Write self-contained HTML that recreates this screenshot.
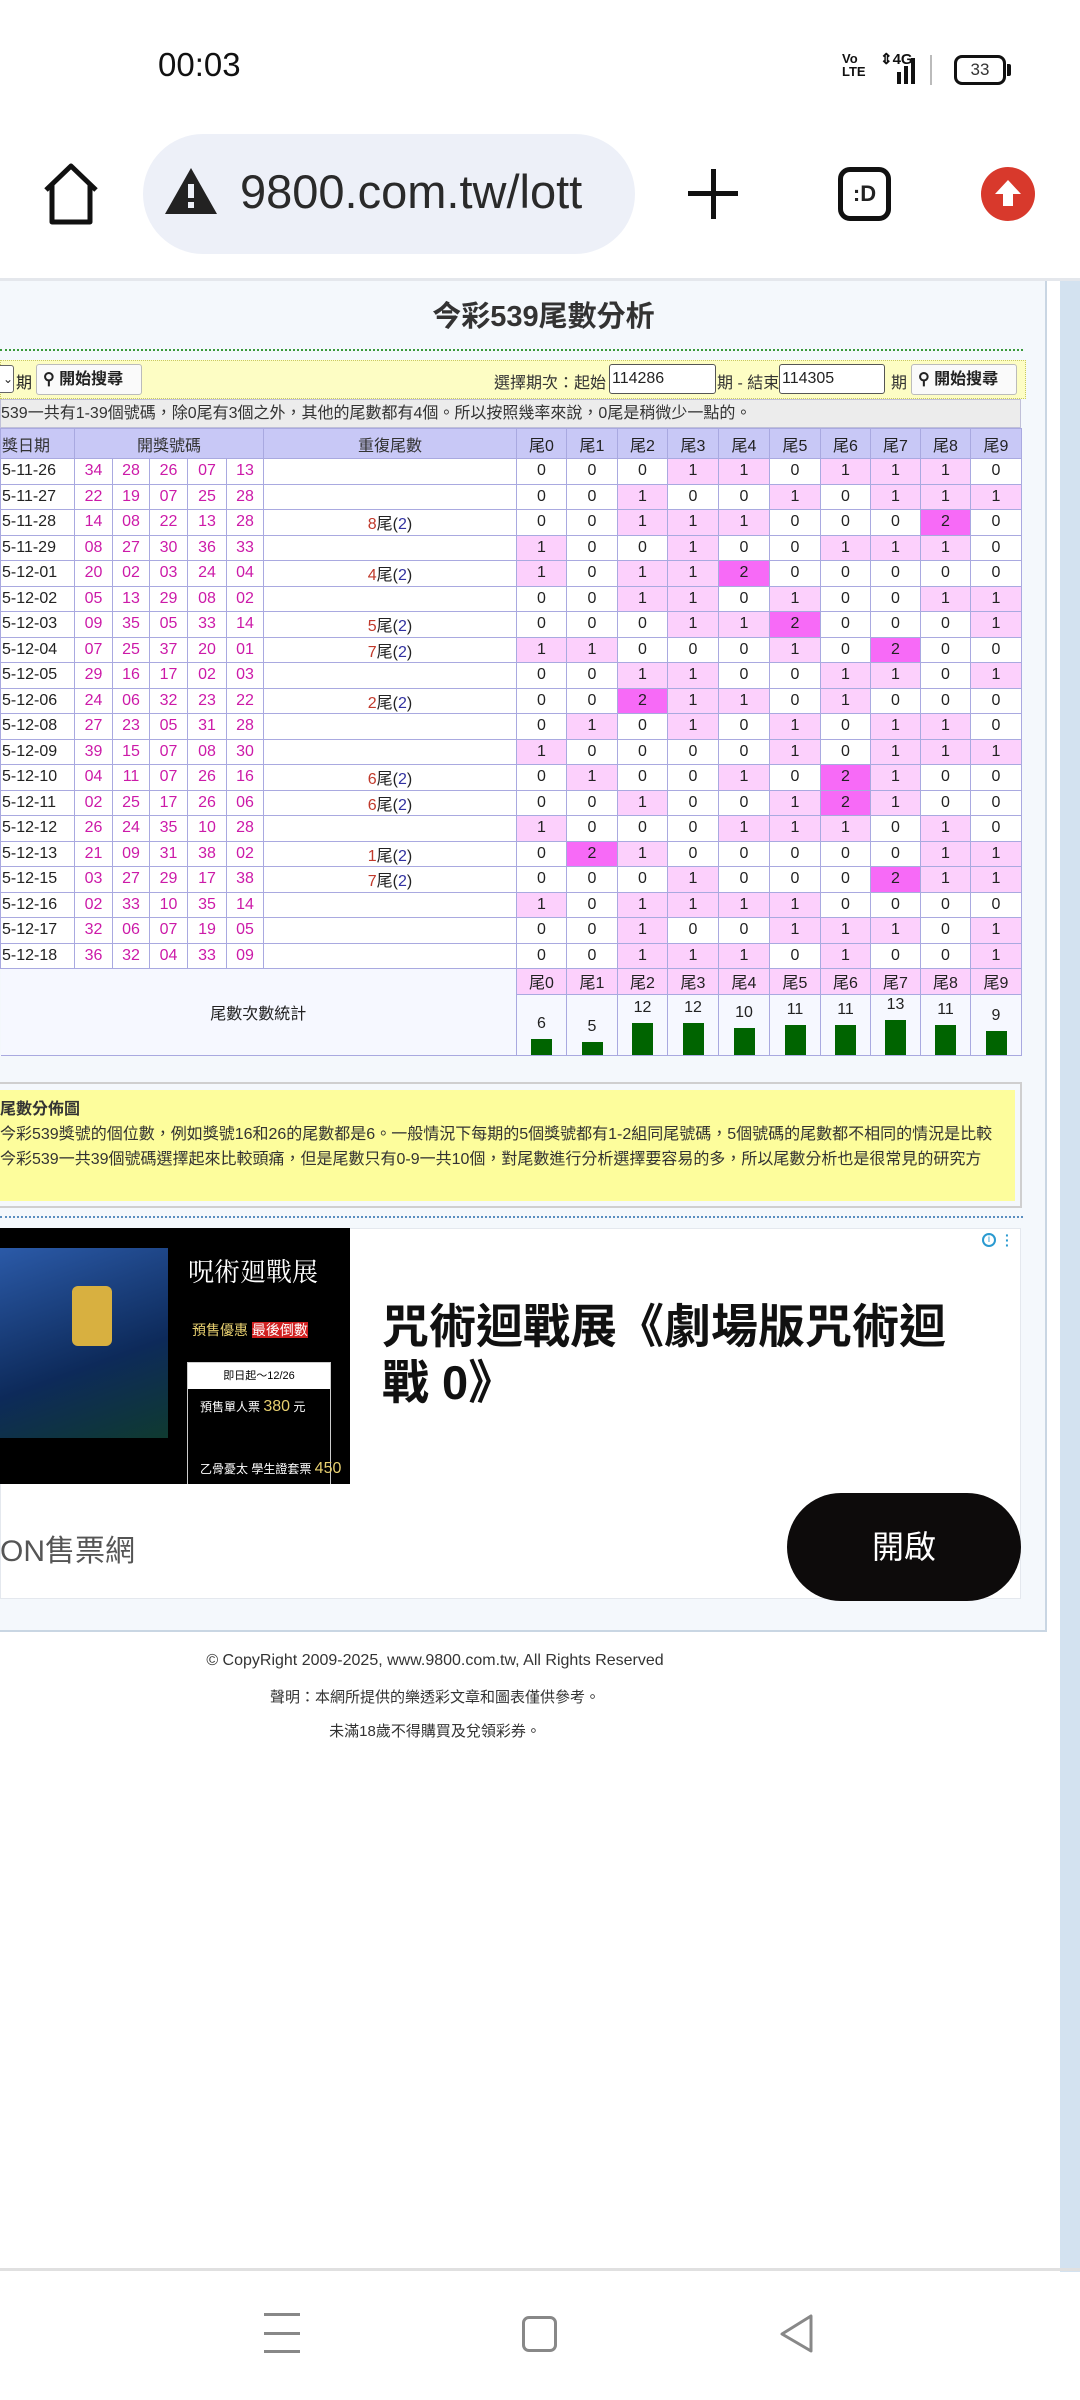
<!DOCTYPE html>
<html><head><meta charset="utf-8">
<style>
*{margin:0;padding:0;box-sizing:border-box}
body{width:1080px;height:2400px;background:#fff;position:relative;overflow:hidden;font-family:"Liberation Sans","Noto Sans CJK TC",sans-serif;color:#222}
.abs{position:absolute}
#page{position:absolute;left:0;top:278px;width:1080px;height:1991px;background:#fff;border-top:3px solid #e4e7ec}
#cont{position:absolute;left:0;top:0;width:1047px;height:1351px;background:#f4f8fc;border-right:2px solid #c9d6e3;border-bottom:2px solid #c9d6e3}
#strip{position:absolute;left:1060px;top:0;width:20px;height:1991px;background:#d3e2f0}
table{border-collapse:collapse;table-layout:fixed;position:absolute;left:0;top:455px;font-size:16px}
td{border:1px solid #a9a9e0;height:25.5px;text-align:center;color:#222;padding:0;white-space:nowrap;overflow:hidden;background:#fff}
td.d{text-align:left;padding-left:1px}
td.n{color:#cc1aa8}
td.p{background:#fcd0fc}
td.m{background:#f76af7}
.r{color:#c0392b}
.b{color:#3030a0}
</style></head><body>
<!-- status bar -->
<div class="abs" style="left:158px;top:46px;font-size:33px;color:#111">00:03</div>
<div class="abs" style="left:842px;top:52px;font-size:13px;line-height:13px;font-weight:bold;color:#111">Vo<br>LTE</div>
<div class="abs" style="left:880px;top:50px;font-size:15px;font-weight:bold;color:#111">⇕4G</div>
<div class="abs" style="left:897px;top:72px;width:4px;height:12px;background:#111"></div>
<div class="abs" style="left:904px;top:66px;width:4px;height:18px;background:#111"></div>
<div class="abs" style="left:911px;top:58px;width:4px;height:26px;background:#111"></div>
<div class="abs" style="left:930px;top:55px;width:2px;height:30px;background:#bbb"></div>
<div class="abs" style="left:954px;top:55px;width:52px;height:30px;border:3px solid #111;border-radius:8px;font-size:17px;text-align:center;line-height:24px;color:#333">33</div>
<div class="abs" style="left:1007px;top:64px;width:4px;height:12px;background:#111;border-radius:0 2px 2px 0"></div>
<!-- url bar -->
<svg class="abs" style="left:40px;top:160px" width="62" height="68" viewBox="0 0 62 68"><path d="M6 30 L31 6 L56 30 M12 24 V62 H50 V24" fill="none" stroke="#111" stroke-width="5" stroke-linejoin="round"/></svg>
<div class="abs" style="left:143px;top:134px;width:492px;height:120px;background:#edf0f8;border-radius:60px"></div>
<svg class="abs" style="left:163px;top:166px" width="56" height="50" viewBox="0 0 56 50"><path d="M28 2 L54 48 H2 Z" fill="#222"/><rect x="25" y="18" width="6" height="14" fill="#edf0f8"/><rect x="25" y="36" width="6" height="6" fill="#edf0f8"/></svg>
<div class="abs" style="left:240px;top:164px;font-size:47px;color:#2a2a2a">9800.com.tw/lott</div>
<div class="abs" style="left:688px;top:191px;width:50px;height:5px;background:#111"></div>
<div class="abs" style="left:711px;top:169px;width:5px;height:50px;background:#111"></div>
<div class="abs" style="left:838px;top:167px;width:53px;height:54px;border:5px solid #111;border-radius:12px;font-size:22px;font-weight:bold;text-align:center;line-height:44px">:D</div>
<div class="abs" style="left:981px;top:167px;width:54px;height:54px;border-radius:50%;background:#d8392c"></div>
<svg class="abs" style="left:981px;top:167px" width="54" height="54" viewBox="0 0 54 54"><path d="M27 13 L40 27 H32 V39 H22 V27 H14 Z" fill="#fff"/></svg>

<div id="page">
<div id="strip"></div>
<div id="cont">
<div class="abs" style="left:0;top:12px;width:1047px;text-align:center;padding-left:40px;font-size:29px;font-weight:bold;color:#333">今彩539尾數分析</div>
<div class="abs" style="left:0;top:68px;width:1023px;border-top:2px dotted #3a9a3a"></div>
<!-- yellow bar -->
<div class="abs" style="left:0;top:79px;width:1026px;height:39px;background:#fdfdc4;border:1px dotted #c8c860"></div>
<div class="abs" style="left:-6px;top:84px;width:20px;height:28px;border:1px solid #666;border-radius:3px;background:#fff;font-size:12px;line-height:26px;text-align:right">⌄</div>
<div class="abs" style="left:16px;top:88px;font-size:16px">期</div>
<div class="abs" style="left:36px;top:83px;width:106px;height:31px;border:1px solid #bbb;border-radius:3px;background:#fafafa;font-size:16px;font-weight:bold;line-height:29px;padding-left:6px">⚲ 開始搜尋</div>
<div class="abs" style="left:494px;top:88px;font-size:16px;color:#333">選擇期次：起始</div>
<div class="abs" style="left:609px;top:83px;width:107px;height:30px;border:1px solid #555;border-radius:3px;background:#fff;font-size:16px;line-height:28px;padding-left:2px">114286</div>
<div class="abs" style="left:717px;top:88px;font-size:16px;color:#333">期 - 結束</div>
<div class="abs" style="left:779px;top:83px;width:106px;height:30px;border:1px solid #555;border-radius:3px;background:#fff;font-size:16px;line-height:28px;padding-left:2px">114305</div>
<div class="abs" style="left:891px;top:88px;font-size:16px;color:#333">期</div>
<div class="abs" style="left:911px;top:83px;width:106px;height:31px;border:1px solid #bbb;border-radius:3px;background:#fafafa;font-size:16px;font-weight:bold;line-height:29px;padding-left:6px">⚲ 開始搜尋</div>
<div class="abs" style="left:0;top:118px;width:1021px;height:29px;background:#ececec;border:1px solid #c0c0d8;font-size:16px;line-height:27px;color:#333;white-space:nowrap;overflow:hidden">539一共有1-39個號碼，除0尾有3個之外，其他的尾數都有4個。所以按照幾率來說，0尾是稍微少一點的。</div>
</div>

<table style="top:147px">
<colgroup><col style="width:74px"><col style="width:38px"><col style="width:37px"><col style="width:38px"><col style="width:39px"><col style="width:37px"><col style="width:253px"><col style="width:50px"><col style="width:51px"><col style="width:50px"><col style="width:51px"><col style="width:51px"><col style="width:51px"><col style="width:50px"><col style="width:50px"><col style="width:50px"><col style="width:51px"></colgroup>
<tr style="height:30px"><td class="d" style="background:#c8c8f6;color:#333">獎日期</td><td colspan="5" style="background:#c8c8f6;color:#333">開獎號碼</td><td style="background:#c8c8f6;color:#333">重復尾數</td><td style="background:#c8c8f6">尾0</td><td style="background:#c8c8f6">尾1</td><td style="background:#c8c8f6">尾2</td><td style="background:#c8c8f6">尾3</td><td style="background:#c8c8f6">尾4</td><td style="background:#c8c8f6">尾5</td><td style="background:#c8c8f6">尾6</td><td style="background:#c8c8f6">尾7</td><td style="background:#c8c8f6">尾8</td><td style="background:#c8c8f6">尾9</td></tr>
<tr><td class="d">5-11-26</td><td class="n">34</td><td class="n">28</td><td class="n">26</td><td class="n">07</td><td class="n">13</td><td></td><td>0</td><td>0</td><td>0</td><td class="p">1</td><td class="p">1</td><td>0</td><td class="p">1</td><td class="p">1</td><td class="p">1</td><td>0</td></tr>
<tr><td class="d">5-11-27</td><td class="n">22</td><td class="n">19</td><td class="n">07</td><td class="n">25</td><td class="n">28</td><td></td><td>0</td><td>0</td><td class="p">1</td><td>0</td><td>0</td><td class="p">1</td><td>0</td><td class="p">1</td><td class="p">1</td><td class="p">1</td></tr>
<tr><td class="d">5-11-28</td><td class="n">14</td><td class="n">08</td><td class="n">22</td><td class="n">13</td><td class="n">28</td><td><span class="r">8</span>尾(<span class="b">2</span>)</td><td>0</td><td>0</td><td class="p">1</td><td class="p">1</td><td class="p">1</td><td>0</td><td>0</td><td>0</td><td class="m">2</td><td>0</td></tr>
<tr><td class="d">5-11-29</td><td class="n">08</td><td class="n">27</td><td class="n">30</td><td class="n">36</td><td class="n">33</td><td></td><td class="p">1</td><td>0</td><td>0</td><td class="p">1</td><td>0</td><td>0</td><td class="p">1</td><td class="p">1</td><td class="p">1</td><td>0</td></tr>
<tr><td class="d">5-12-01</td><td class="n">20</td><td class="n">02</td><td class="n">03</td><td class="n">24</td><td class="n">04</td><td><span class="r">4</span>尾(<span class="b">2</span>)</td><td class="p">1</td><td>0</td><td class="p">1</td><td class="p">1</td><td class="m">2</td><td>0</td><td>0</td><td>0</td><td>0</td><td>0</td></tr>
<tr><td class="d">5-12-02</td><td class="n">05</td><td class="n">13</td><td class="n">29</td><td class="n">08</td><td class="n">02</td><td></td><td>0</td><td>0</td><td class="p">1</td><td class="p">1</td><td>0</td><td class="p">1</td><td>0</td><td>0</td><td class="p">1</td><td class="p">1</td></tr>
<tr><td class="d">5-12-03</td><td class="n">09</td><td class="n">35</td><td class="n">05</td><td class="n">33</td><td class="n">14</td><td><span class="r">5</span>尾(<span class="b">2</span>)</td><td>0</td><td>0</td><td>0</td><td class="p">1</td><td class="p">1</td><td class="m">2</td><td>0</td><td>0</td><td>0</td><td class="p">1</td></tr>
<tr><td class="d">5-12-04</td><td class="n">07</td><td class="n">25</td><td class="n">37</td><td class="n">20</td><td class="n">01</td><td><span class="r">7</span>尾(<span class="b">2</span>)</td><td class="p">1</td><td class="p">1</td><td>0</td><td>0</td><td>0</td><td class="p">1</td><td>0</td><td class="m">2</td><td>0</td><td>0</td></tr>
<tr><td class="d">5-12-05</td><td class="n">29</td><td class="n">16</td><td class="n">17</td><td class="n">02</td><td class="n">03</td><td></td><td>0</td><td>0</td><td class="p">1</td><td class="p">1</td><td>0</td><td>0</td><td class="p">1</td><td class="p">1</td><td>0</td><td class="p">1</td></tr>
<tr><td class="d">5-12-06</td><td class="n">24</td><td class="n">06</td><td class="n">32</td><td class="n">23</td><td class="n">22</td><td><span class="r">2</span>尾(<span class="b">2</span>)</td><td>0</td><td>0</td><td class="m">2</td><td class="p">1</td><td class="p">1</td><td>0</td><td class="p">1</td><td>0</td><td>0</td><td>0</td></tr>
<tr><td class="d">5-12-08</td><td class="n">27</td><td class="n">23</td><td class="n">05</td><td class="n">31</td><td class="n">28</td><td></td><td>0</td><td class="p">1</td><td>0</td><td class="p">1</td><td>0</td><td class="p">1</td><td>0</td><td class="p">1</td><td class="p">1</td><td>0</td></tr>
<tr><td class="d">5-12-09</td><td class="n">39</td><td class="n">15</td><td class="n">07</td><td class="n">08</td><td class="n">30</td><td></td><td class="p">1</td><td>0</td><td>0</td><td>0</td><td>0</td><td class="p">1</td><td>0</td><td class="p">1</td><td class="p">1</td><td class="p">1</td></tr>
<tr><td class="d">5-12-10</td><td class="n">04</td><td class="n">11</td><td class="n">07</td><td class="n">26</td><td class="n">16</td><td><span class="r">6</span>尾(<span class="b">2</span>)</td><td>0</td><td class="p">1</td><td>0</td><td>0</td><td class="p">1</td><td>0</td><td class="m">2</td><td class="p">1</td><td>0</td><td>0</td></tr>
<tr><td class="d">5-12-11</td><td class="n">02</td><td class="n">25</td><td class="n">17</td><td class="n">26</td><td class="n">06</td><td><span class="r">6</span>尾(<span class="b">2</span>)</td><td>0</td><td>0</td><td class="p">1</td><td>0</td><td>0</td><td class="p">1</td><td class="m">2</td><td class="p">1</td><td>0</td><td>0</td></tr>
<tr><td class="d">5-12-12</td><td class="n">26</td><td class="n">24</td><td class="n">35</td><td class="n">10</td><td class="n">28</td><td></td><td class="p">1</td><td>0</td><td>0</td><td>0</td><td class="p">1</td><td class="p">1</td><td class="p">1</td><td>0</td><td class="p">1</td><td>0</td></tr>
<tr><td class="d">5-12-13</td><td class="n">21</td><td class="n">09</td><td class="n">31</td><td class="n">38</td><td class="n">02</td><td><span class="r">1</span>尾(<span class="b">2</span>)</td><td>0</td><td class="m">2</td><td class="p">1</td><td>0</td><td>0</td><td>0</td><td>0</td><td>0</td><td class="p">1</td><td class="p">1</td></tr>
<tr><td class="d">5-12-15</td><td class="n">03</td><td class="n">27</td><td class="n">29</td><td class="n">17</td><td class="n">38</td><td><span class="r">7</span>尾(<span class="b">2</span>)</td><td>0</td><td>0</td><td>0</td><td class="p">1</td><td>0</td><td>0</td><td>0</td><td class="m">2</td><td class="p">1</td><td class="p">1</td></tr>
<tr><td class="d">5-12-16</td><td class="n">02</td><td class="n">33</td><td class="n">10</td><td class="n">35</td><td class="n">14</td><td></td><td class="p">1</td><td>0</td><td class="p">1</td><td class="p">1</td><td class="p">1</td><td class="p">1</td><td>0</td><td>0</td><td>0</td><td>0</td></tr>
<tr><td class="d">5-12-17</td><td class="n">32</td><td class="n">06</td><td class="n">07</td><td class="n">19</td><td class="n">05</td><td></td><td>0</td><td>0</td><td class="p">1</td><td>0</td><td>0</td><td class="p">1</td><td class="p">1</td><td class="p">1</td><td>0</td><td class="p">1</td></tr>
<tr><td class="d">5-12-18</td><td class="n">36</td><td class="n">32</td><td class="n">04</td><td class="n">33</td><td class="n">09</td><td></td><td>0</td><td>0</td><td class="p">1</td><td class="p">1</td><td class="p">1</td><td>0</td><td class="p">1</td><td>0</td><td>0</td><td class="p">1</td></tr>
<tr><td colspan="7" rowspan="2" style="background:#f6f8ff;border-left:none">尾數次數統計</td><td class="p">尾0</td><td class="p">尾1</td><td class="p">尾2</td><td class="p">尾3</td><td class="p">尾4</td><td class="p">尾5</td><td class="p">尾6</td><td class="p">尾7</td><td class="p">尾8</td><td class="p">尾9</td></tr>
<tr style="height:61px"><td style="vertical-align:bottom;background:#f6f8ff">6<div style="width:21px;height:16px;background:#006400;margin:6px auto 0"></div></td><td style="vertical-align:bottom;background:#f6f8ff">5<div style="width:21px;height:13px;background:#006400;margin:6px auto 0"></div></td><td style="vertical-align:bottom;background:#f6f8ff">12<div style="width:21px;height:32px;background:#006400;margin:6px auto 0"></div></td><td style="vertical-align:bottom;background:#f6f8ff">12<div style="width:21px;height:32px;background:#006400;margin:6px auto 0"></div></td><td style="vertical-align:bottom;background:#f6f8ff">10<div style="width:21px;height:27px;background:#006400;margin:6px auto 0"></div></td><td style="vertical-align:bottom;background:#f6f8ff">11<div style="width:21px;height:30px;background:#006400;margin:6px auto 0"></div></td><td style="vertical-align:bottom;background:#f6f8ff">11<div style="width:21px;height:30px;background:#006400;margin:6px auto 0"></div></td><td style="vertical-align:bottom;background:#f6f8ff">13<div style="width:21px;height:35px;background:#006400;margin:6px auto 0"></div></td><td style="vertical-align:bottom;background:#f6f8ff">11<div style="width:21px;height:30px;background:#006400;margin:6px auto 0"></div></td><td style="vertical-align:bottom;background:#f6f8ff">9<div style="width:21px;height:24px;background:#006400;margin:6px auto 0"></div></td></tr>
</table>

<!-- yellow info box -->
<div class="abs" style="left:-2px;top:801px;width:1024px;height:126px;border:2px solid #cfcfcf;background:#f4f8fc"></div>
<div class="abs" style="left:0;top:809px;width:1015px;height:111px;background:#fdfd9c;font-size:16px;color:#333;line-height:25px;padding-top:7px;white-space:nowrap;overflow:hidden">
<div style="font-weight:bold">尾數分佈圖</div>
<div>今彩539獎號的個位數，例如獎號16和26的尾數都是6。一般情況下每期的5個獎號都有1-2組同尾號碼，5個號碼的尾數都不相同的情況是比較</div>
<div>今彩539一共39個號碼選擇起來比較頭痛，但是尾數只有0-9一共10個，對尾數進行分析選擇要容易的多，所以尾數分析也是很常見的研究方</div>
</div>
<div class="abs" style="left:0;top:935px;width:1023px;border-top:2px dotted #5a8ec0"></div>
<!-- ad -->
<div class="abs" style="left:0;top:947px;width:1021px;height:371px;background:#fff;border:1px solid #e4e8ee"></div>
<div class="abs" style="left:0;top:947px;width:350px;height:256px;background:#000;overflow:hidden">
<div class="abs" style="left:0;top:20px;width:168px;height:190px;background:linear-gradient(160deg,#2b5aa8,#0d2a5a 60%,#0f3a30)"></div>
<div class="abs" style="left:72px;top:58px;width:40px;height:60px;background:#d8b040;border-radius:6px"></div>
<div class="abs" style="left:188px;top:24px;color:#fff;font-size:26px;font-family:'Noto Serif CJK SC',serif">呪術廻戰展</div>
<div class="abs" style="left:192px;top:92px;color:#e8d070;font-size:14px">預售優惠 <span style="background:#d02020;color:#fff">最後倒數</span></div>
<div class="abs" style="left:187px;top:134px;width:144px;height:226px;border:1px solid #ccc"></div>
<div class="abs" style="left:188px;top:135px;width:142px;height:26px;background:#fff;color:#000;font-size:11px;text-align:center;line-height:26px">即日起～12/26</div>
<div class="abs" style="left:200px;top:170px;color:#fff;font-size:12px">預售單人票 <span style="color:#e8d070;font-size:16px">380</span> 元</div>
<div class="abs" style="left:200px;top:232px;color:#fff;font-size:12px">乙骨憂太 學生證套票 <span style="color:#e8d070;font-size:16px">450</span></div>
</div>
<div class="abs" style="left:382px;top:1018px;font-size:47px;font-weight:bold;line-height:56px;color:#111;width:590px">咒術迴戰展《劇場版咒術迴戰 0》</div>
<div class="abs" style="left:982px;top:952px;width:14px;height:14px;border:2px solid #2a9ad0;border-radius:50%;font-size:10px;color:#2a9ad0;text-align:center;line-height:10px">i</div>
<div class="abs" style="left:1005px;top:952px;font-size:14px;color:#2a9ad0;line-height:5px;font-weight:bold">·<br>·<br>·</div>
<div class="abs" style="left:0;top:1245px;font-size:30px;color:#555">ON售票網</div>
<div class="abs" style="left:787px;top:1212px;width:234px;height:108px;background:#0d0b0b;border-radius:54px;color:#fff;font-size:32px;text-align:center;line-height:108px">開啟</div>
<!-- footer -->
<div class="abs" style="left:0;top:1371px;width:870px;text-align:center;font-size:16px;color:#333">© CopyRight 2009-2025, www.9800.com.tw, All Rights Reserved</div>
<div class="abs" style="left:0;top:1405px;width:870px;text-align:center;font-size:15px;color:#333">聲明：本網所提供的樂透彩文章和圖表僅供參考。</div>
<div class="abs" style="left:0;top:1439px;width:870px;text-align:center;font-size:15px;color:#333">未滿18歲不得購買及兌領彩券。</div>
</div>
<!-- nav -->
<div class="abs" style="left:0;top:2268px;width:1080px;height:3px;background:#e0e0e0"></div>
<div class="abs" style="left:264px;top:2313px;width:36px;height:3px;background:#888"></div>
<div class="abs" style="left:264px;top:2332px;width:36px;height:3px;background:#888"></div>
<div class="abs" style="left:264px;top:2350px;width:36px;height:3px;background:#888"></div>
<div class="abs" style="left:522px;top:2316px;width:35px;height:36px;border:3px solid #888;border-radius:7px"></div>
<svg class="abs" style="left:778px;top:2313px" width="40" height="42" viewBox="0 0 40 42"><path d="M33 3 V38 L4 21 Z" fill="none" stroke="#888" stroke-width="3" stroke-linejoin="round"/></svg>
</body></html>
